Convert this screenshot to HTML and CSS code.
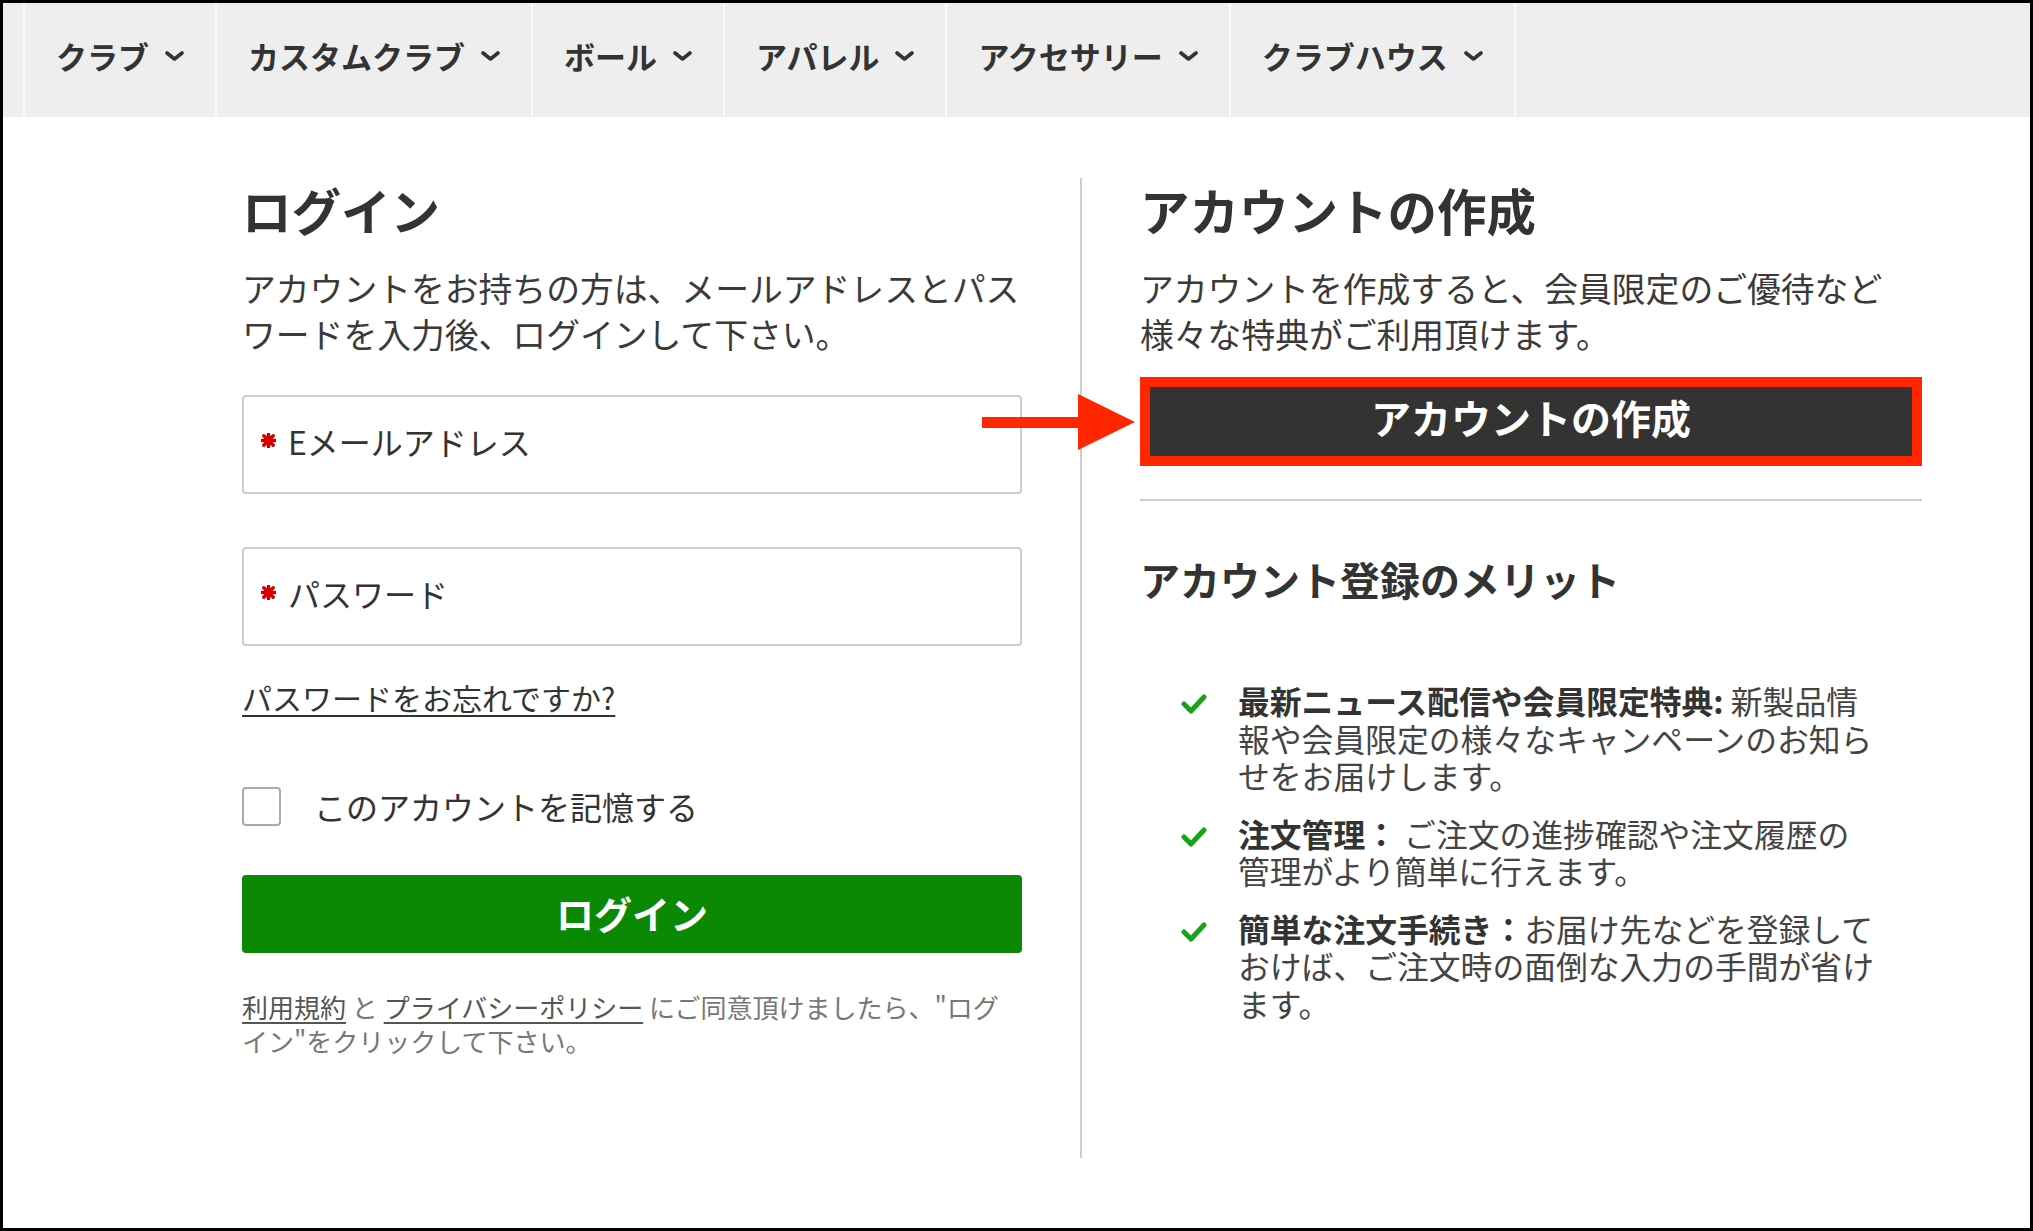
FILE: index.html
```html
<!DOCTYPE html>
<html lang="ja">
<head>
    <meta charset="UTF-8">
    <title>ログイン</title>
    <link rel="stylesheet" href="styles.css">
</head>
<body>
<div class="frame">
    <nav class="nav">
        <a class="nav-item" href="#">クラブ <svg class="chev" viewBox="0 0 19 10"><polyline points="2,2 9.5,8 17,2"/></svg></a>
        <a class="nav-item" href="#">カスタムクラブ <svg class="chev" viewBox="0 0 19 10"><polyline points="2,2 9.5,8 17,2"/></svg></a>
        <a class="nav-item" href="#">ボール <svg class="chev" viewBox="0 0 19 10"><polyline points="2,2 9.5,8 17,2"/></svg></a>
        <a class="nav-item" href="#">アパレル <svg class="chev" viewBox="0 0 19 10"><polyline points="2,2 9.5,8 17,2"/></svg></a>
        <a class="nav-item" href="#">アクセサリー <svg class="chev" viewBox="0 0 19 10"><polyline points="2,2 9.5,8 17,2"/></svg></a>
        <a class="nav-item" href="#">クラブハウス <svg class="chev" viewBox="0 0 19 10"><polyline points="2,2 9.5,8 17,2"/></svg></a>
    </nav>

    <div class="content">
        <!-- login -->
        <section class="login">
            <h1 class="title">ログイン</h1>
            <p class="lead">アカウントをお持ちの方は、メールアドレスとパスワードを入力後、ログインして下さい。</p>

            <div class="field">
                <input type="email" id="email">
                <label for="email"><svg class="req" viewBox="0 0 16 16"><path d="M8 1v14M1 8h14M3 3l10 10M13 3L3 13"/></svg>Eメールアドレス</label>
            </div>
            <div class="field field-pass">
                <input type="password" id="password">
                <label for="password"><svg class="req" viewBox="0 0 16 16"><path d="M8 1v14M1 8h14M3 3l10 10M13 3L3 13"/></svg>パスワード</label>
            </div>

            <div class="forgot-row"><a class="forgot" href="#">パスワードをお忘れですか?</a></div>

            <label class="remember">
                <input type="checkbox" class="check">
                <span>このアカウントを記憶する</span>
            </label>

            <button class="btn-login">ログイン</button>

            <p class="terms"><a href="#">利用規約</a> と <a href="#">プライバシーポリシー</a> にご同意頂けましたら、"ログイン"をクリックして下さい。</p>
        </section>

        <div class="divider"></div>

        <!-- create account -->
        <section class="create">
            <h1 class="title">アカウントの作成</h1>
            <p class="lead">アカウントを作成すると、会員限定のご優待など様々な特典がご利用頂けます。</p>

            <div class="create-wrap">
                <svg class="arrow" viewBox="0 0 153 56"><rect x="0" y="23" width="98" height="11"/><polygon points="96,0 153,28 96,56"/></svg>
                <button class="btn-create">アカウントの作成</button>
            </div>

            <hr class="rule">

            <h2 class="sub">アカウント登録のメリット</h2>

            <ul class="merits">
                <li>
                    <svg class="tick" viewBox="0 0 26 20"><polyline points="3,10 10,17 23,3"/></svg>
                    <div class="merit-body"><b>最新ニュース配信や会員限定特典:</b> 新製品情報や会員限定の様々なキャンペーンのお知らせをお届けします。</div>
                </li>
                <li>
                    <svg class="tick" viewBox="0 0 26 20"><polyline points="3,10 10,17 23,3"/></svg>
                    <div class="merit-body"><b>注文管理：</b> ご注文の進捗確認や注文履歴の管理がより簡単に行えます。</div>
                </li>
                <li>
                    <svg class="tick" viewBox="0 0 26 20"><polyline points="3,10 10,17 23,3"/></svg>
                    <div class="merit-body"><b>簡単な注文手続き：</b>お届け先などを登録しておけば、ご注文時の面倒な入力の手間が省けます。</div>
                </li>
            </ul>
        </section>
    </div>
</div>
</body>
</html>
```

FILE: styles.css
```css
body {
    margin: 0;
    font-family: "Noto Sans CJK JP", "Noto Sans", sans-serif;
    color: #333;
    background: #fff;
}
.frame {
    height: 1231px;
    box-sizing: border-box;
    border: 3px solid #000;
    overflow: hidden;
}
.nav {
    display: flex;
    height: 114px;
    padding-left: 20px;
    background: #eee;
}
.nav-item {
    display: flex;
    align-items: center;
    gap: 16px;
    padding: 0 31px 9px;
    border-left: 2px solid #fafafa;
    color: #333;
    font-size: 31px;
    font-weight: bold;
    line-height: 1;
    text-decoration: none;
    white-space: nowrap;
}
.nav-item:last-child {
    border-right: 2px solid #fafafa;
}
.chev {
    width: 19px;
    height: 10px;
    fill: none;
    stroke: #333;
    stroke-width: 3.6;
    stroke-linecap: round;
    stroke-linejoin: round;
}
.content {
    display: grid;
    grid-template-columns: 780px 2px 782px;
    column-gap: 58px;
    align-items: start;
    padding: 61px 0 0 239px;
}
.divider {
    height: 980px;
    background: #ccc;
    width: 2px;
}
.title {
    margin: 0;
    font-size: 49.5px;
    line-height: 64px;
    font-weight: bold;
    color: #333;
}
.lead {
    margin: 23px 0 0;
    font-size: 33.8px;
    line-height: 46px;
    color: #3a3a3a;
}
.create .lead {
    max-width: 22.5em;
}
.field {
    position: relative;
    margin-top: 38px;
}
.field-pass {
    margin-top: 53px;
}
.field input {
    display: block;
    width: 100%;
    height: 99px;
    box-sizing: border-box;
    border: 2px solid #ccc;
    border-radius: 4px;
    background: #fff;
}
.field label {
    position: absolute;
    left: 19px;
    top: calc(50% - 4px);
    transform: translateY(-50%);
    display: flex;
    align-items: center;
    gap: 12px;
    font-size: 32px;
    color: #333;
    pointer-events: none;
}
.req {
    width: 15px;
    height: 15px;
    fill: none;
    stroke: #d40000;
    stroke-width: 3.6;
    stroke-linecap: round;
}
.forgot-row {
    margin-top: 31px;
    line-height: 40px;
}
.forgot {
    font-size: 30px;
    color: #333;
    text-decoration: underline;
    text-underline-offset: 5px;
    text-decoration-thickness: 2px;
}
.remember {
    display: flex;
    align-items: center;
    gap: 33px;
    margin-top: 64px;
    font-size: 32px;
    line-height: 39px;
    color: #333;
}
.check {
    appearance: none;
    margin: 0;
    width: 39px;
    height: 39px;
    box-sizing: border-box;
    border: 2px solid #aaa;
    border-radius: 4px;
    background: #fff;
}
.btn-login {
    display: block;
    width: 100%;
    height: 78px;
    margin-top: 49px;
    padding: 0 0 4px;
    border: none;
    border-radius: 4px;
    background: #0b8905;
    color: #fff;
    font-family: inherit;
    font-size: 38px;
    font-weight: bold;
    cursor: pointer;
}
.terms {
    margin: 37px 0 0;
    font-size: 26px;
    line-height: 34px;
    color: #777;
}
.terms a {
    color: #555;
    text-decoration: underline;
    text-underline-offset: 4px;
}
.create-wrap {
    position: relative;
    margin-top: 20px;
    border: 10px solid #ff2600;
}
.arrow {
    position: absolute;
    right: calc(100% + 15px);
    top: 50%;
    transform: translateY(-50%);
    width: 153px;
    height: 56px;
    fill: #ff2600;
}
.btn-create {
    display: block;
    width: 100%;
    height: 69px;
    padding: 0 0 10px;
    border: none;
    background: #333;
    color: #fff;
    font-family: inherit;
    font-size: 40px;
    font-weight: bold;
    cursor: pointer;
}
.rule {
    margin: 33px 0 0;
    border: none;
    border-top: 2px solid #ccc;
}
.sub {
    margin: 53px 0 0;
    font-size: 40px;
    line-height: 50px;
    font-weight: bold;
    color: #333;
}
.merits {
    margin: 78px 0 0;
    padding: 0;
    list-style: none;
}
.merits li {
    position: relative;
    padding-left: 98px;
    font-size: 31.8px;
    line-height: 37.5px;
    color: #444;
}
.merits li + li {
    margin-top: 20px;
}
.merits b {
    color: #333;
}
.merit-body {
    width: 20.1em;
}
.tick {
    position: absolute;
    left: 41px;
    top: 12px;
    width: 26px;
    height: 20px;
    fill: none;
    stroke: #17a317;
    stroke-width: 5;
    stroke-linecap: round;
    stroke-linejoin: round;
}
```
